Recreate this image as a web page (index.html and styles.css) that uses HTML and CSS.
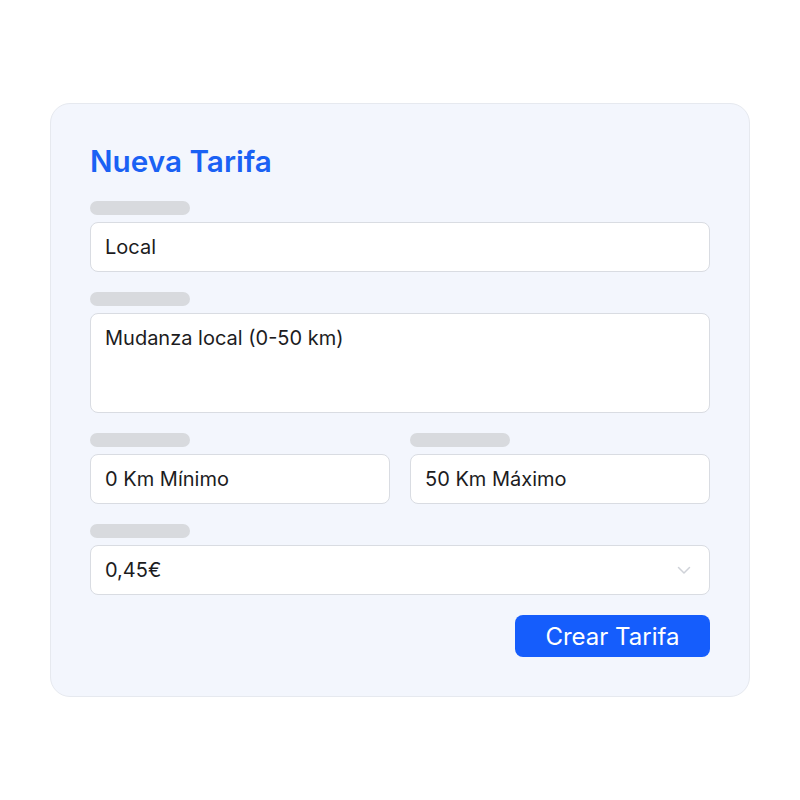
FILE: index.html
```html
<!DOCTYPE html>
<html lang="es">
<head>
    <meta charset="UTF-8">
    <meta name="viewport" content="width=device-width, initial-scale=1.0">
    <title>Nueva Tarifa</title>
    <link rel="stylesheet" href="styles.css">
</head>
<body>
    <div class="card">
        <h1>Nueva Tarifa</h1>

        <div class="field">
            <span class="label-bar"></span>
            <div class="input">Local</div>
        </div>

        <div class="field">
            <span class="label-bar"></span>
            <div class="input textarea">Mudanza local (0-50 km)</div>
        </div>

        <div class="row">
            <div class="field">
                <span class="label-bar"></span>
                <div class="input">0 Km Mínimo</div>
            </div>
            <div class="field">
                <span class="label-bar"></span>
                <div class="input">50 Km Máximo</div>
            </div>
        </div>

        <div class="field">
            <span class="label-bar"></span>
            <div class="input select">
                <span>0,45€</span>
                <svg class="chevron" width="16" height="16" viewBox="0 0 16 16" fill="none">
                    <path d="M2.5 5.5 8 11l5.5-5.5" stroke="#cfd2d8" stroke-width="1.5" stroke-linecap="round" stroke-linejoin="round"/>
                </svg>
            </div>
        </div>

        <div class="actions">
            <button class="create-button">Crear Tarifa</button>
        </div>
    </div>
</body>
</html>
```

FILE: styles.css
```css
body {
    font-family: Inter, "Noto Sans", sans-serif;
    background-color: #fff;
    margin: 0;
    padding: 0;
}
.card {
    width: 700px;
    margin: 103px auto 0;
    padding: 39px;
    background-color: #f3f6fd;
    border: 1px solid #e6e9ef;
    border-radius: 20px;
    box-sizing: border-box;
}
h1 {
    margin: 0 0 22px;
    font-size: 29.7px;
    font-weight: 600;
    line-height: 36px;
    color: #1a61f4;
}
.field {
    display: flex;
    flex-direction: column;
    gap: 7px;
    margin-bottom: 20px;
}
.label-bar {
    display: block;
    width: 100px;
    height: 14px;
    border-radius: 7px;
    background-color: #d8dade;
}
.input {
    height: 50px;
    box-sizing: border-box;
    padding: 0 14px;
    display: flex;
    align-items: center;
    background: #fff;
    border: 1px solid #d9dce2;
    border-radius: 8px;
    font-size: 20px;
    color: #1c1c1e;
}
.textarea {
    height: 100px;
    align-items: flex-start;
    padding-top: 12px;
}
.row {
    display: grid;
    grid-template-columns: 1fr 1fr;
    gap: 20px;
}
.select {
    justify-content: space-between;
}
.chevron {
    margin-right: 3px;
}
.actions {
    display: flex;
    justify-content: flex-end;
}
.create-button {
    width: 195px;
    height: 42px;
    background-color: #155dfc;
    color: #fff;
    border: none;
    border-radius: 8px;
    font-family: Inter, "Noto Sans", sans-serif;
    font-size: 24px;
    cursor: pointer;
}
```
